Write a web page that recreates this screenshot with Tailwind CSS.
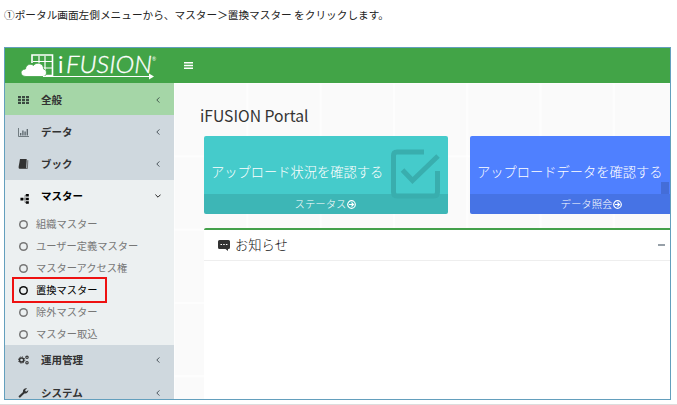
<!DOCTYPE html>
<html lang="ja">
<head>
<meta charset="utf-8">
<title>iFUSION Portal</title>
<script src="https://cdn.jsdelivr.net/npm/@tailwindcss/browser@4"></script>
</head>
<body class="relative h-[405px] w-[677px] overflow-hidden bg-white font-['Noto_Sans_CJK_JP',sans-serif] text-[#333]">
<p class="h-[47px] pt-[7px] pl-1 text-[10.67px] leading-4 whitespace-nowrap text-[#222]">①ポータル画面左側メニューから、マスター＞置換マスター をクリックします。</p>
<div class="relative ml-1 flex h-[353px] w-[667px] flex-col overflow-hidden border border-[#639fbd]">
  <header class="flex h-[35px] shrink-0 items-center bg-[#42a447]">
    <svg class="ml-3 h-[35px] w-[144px] shrink-0" viewBox="0 0 144 35" fill="none" stroke="#fff">
      <path d="M15 15V7H35.500V27.500H27" stroke-width="1.6"/>
      <path d="M22 8V17M28 8V27M16 13.500H35M22 20H35" stroke-width="1.200"/>
      <path d="M9 28.500C2.500 28.300 2.500 21.500 8.500 21C9 16.500 13.500 15 16.500 17.500C19.500 13 27 15.500 26.500 21C31 22 30 28.500 26 28.500Z" fill="#fff" stroke="#42a447" stroke-width=".8"/>
      <path d="M26 28.500H134" stroke-width="1.1"/>
      <path d="M132 25.500L137 28.500L132 31.500Z" fill="#fff" stroke="none"/>
      <text x="41" y="25" fill="#fff" stroke="none" font-family="Lato, sans-serif" font-size="22.5">i</text>
      <text x="49" y="25" fill="#fff" stroke="#fff" stroke-width=".3" font-family="Lato, sans-serif" font-weight="300" font-size="23.5" font-style="italic" textLength="86" lengthAdjust="spacingAndGlyphs">FUSION</text>
      <text x="135" y="13" fill="#fff" stroke="none" font-family="Lato, sans-serif" font-size="5">®</text>
    </svg>
    <svg class="ml-[23px] h-[7px] w-[9px]" viewBox="0 0 9 7" stroke="#fff" stroke-width="1.4"><path d="M0 .8H9M0 3.5H9M0 6.2H9"/></svg>
  </header>
  <div class="flex min-h-0 flex-1">
    <nav class="flex w-[169px] shrink-0 flex-col bg-[#cfd8de] text-[10.5px] font-bold">
      <div class="flex h-8 shrink-0 items-center bg-[#a5d6a7] pt-px pr-[14px] pl-[13px]">
        <svg class="h-2 w-[11px]" viewBox="0 0 11 8" fill="#3b4a41"><path d="M0 0h3v2.200H0zM4 0h3v2.200H4zM8 0h3v2.200H8zM0 2.900h3v2.200H0zM4 2.900h3v2.200H4zM8 2.900h3v2.200H8zM0 5.800h3v2.200H0zM4 5.800h3v2.200H4zM8 5.800h3v2.200H8z"/></svg>
        <span class="ml-3 flex-1">全般</span>
        <svg class="h-[6px] w-1" viewBox="0 0 4 6" fill="none" stroke="#455a50"><path d="M3.4.4L.8 3l2.6 2.6"/></svg>
      </div>
      <div class="flex h-[33px] shrink-0 items-center pt-px pr-[14px] pl-[13px]">
        <svg class="h-[9px] w-[11px]" viewBox="0 0 11 9" fill="none" stroke="#59646a"><path d="M.5 0V8.5H11" stroke-width=".8"/><path d="M2.7 7.5V5M4.9 7.5V2.5M7.1 7.5V3.5M9.3 7.5V1" stroke-width="1.3"/></svg>
        <span class="ml-3 flex-1">データ</span>
        <svg class="h-[6px] w-1" viewBox="0 0 4 6" fill="none" stroke="#4c565c"><path d="M3.4.4L.8 3l2.6 2.6"/></svg>
      </div>
      <div class="flex h-8 shrink-0 items-center pr-[14px] pl-[13px]">
        <svg class="h-[10px] w-[11px]" viewBox="0 0 11 10"><path d="M2 0H8.700L8.200 9.700H1.300Q.5 9.500.6 8Z" fill="#333"/><path d="M9.800 1.200L9.400 9.600H2" fill="none" stroke="#555" stroke-width=".8"/></svg>
        <span class="ml-3 flex-1">ブック</span>
        <svg class="h-[6px] w-1" viewBox="0 0 4 6" fill="none" stroke="#4c565c"><path d="M3.4.4L.8 3l2.6 2.6"/></svg>
      </div>
      <div class="flex h-[33px] shrink-0 items-center bg-[#ecf0f1] pr-[13px] pb-px pl-[15px] text-black">
        <svg class="mt-[5px] h-[10px] w-[10px]" viewBox="0 0 10 11"><path d="M0 4h3.200v3.200H0zM6 0H9.200v2.800H6zM6 4H9.200v2.800H6zM6 8H9.200v2.800H6z" fill="#000"/><path d="M3 5.5H7M7 1.4H5V9.4H7" fill="none" stroke="#333" stroke-width=".6"/></svg>
        <span class="ml-[11px] flex-1">マスター</span>
        <svg class="h-1 w-[6px]" viewBox="0 0 6 4" fill="none" stroke="#222"><path d="M.4.6L3 3.2 5.6.6"/></svg>
      </div>
      <ul class="h-[132px] shrink-0 bg-[#ecf0f1] text-[10.25px] font-normal text-[#777]">
        <li class="flex h-[22px] items-center pl-[14px]"><i class="mr-2 size-[9px] rounded-full shadow-[inset_0_0_0_1.5px_#777]"></i>組織マスター</li>
        <li class="flex h-[22px] items-center pl-[14px]"><i class="mr-2 size-[9px] rounded-full shadow-[inset_0_0_0_1.5px_#777]"></i>ユーザー定義マスター</li>
        <li class="flex h-[22px] items-center pl-[14px]"><i class="mr-2 size-[9px] rounded-full shadow-[inset_0_0_0_1.5px_#777]"></i>マスターアクセス権</li>
        <li class="flex h-[22px] items-center pl-[14px] text-black"><i class="mr-2 size-[9px] rounded-full shadow-[inset_0_0_0_1.5px_#111]"></i>置換マスター</li>
        <li class="flex h-[22px] items-center pl-[14px]"><i class="mr-2 size-[9px] rounded-full shadow-[inset_0_0_0_1.5px_#777]"></i>除外マスター</li>
        <li class="flex h-[22px] items-center pl-[14px]"><i class="mr-2 size-[9px] rounded-full shadow-[inset_0_0_0_1.5px_#777]"></i>マスター取込</li>
      </ul>
      <div class="flex h-8 shrink-0 items-center pr-[14px] pb-[2px] pl-[13px]">
        <svg class="h-[10px] w-[11px]" viewBox="0 0 11 10" fill="none" stroke="#333"><circle cx="3.6" cy="5" r="2.1" stroke-width="1.5"/><circle cx="3.6" cy="5" r="3.2" stroke-width=".9" stroke-dasharray="1.25 1.25"/><circle cx="9" cy="2.3" r="1.2" stroke-width="1.1"/><circle cx="9" cy="7.7" r="1.2" stroke-width="1.1"/></svg>
        <span class="ml-3 flex-1">運用管理</span>
        <svg class="h-[6px] w-1" viewBox="0 0 4 6" fill="none" stroke="#4c565c"><path d="M3.4.4L.8 3l2.6 2.6"/></svg>
      </div>
      <div class="flex h-8 shrink-0 items-center pr-[14px] pl-[13px]">
        <svg class="h-[10px] w-[11px]" viewBox="0 0 11 10"><path d="M.5 8.3L5 4C4.5 1.8 6.5-.2 9 .4L7.2 2 7.4 3.3 8.7 3.5 10.3 2C10.5 4.5 8.5 6 6.4 5.4L2 9.7Q.8 9.7.5 8.3Z" fill="#333"/></svg>
        <span class="ml-3 flex-1">システム</span>
        <svg class="h-[6px] w-1" viewBox="0 0 4 6" fill="none" stroke="#4c565c"><path d="M3.4.4L.8 3l2.6 2.6"/></svg>
      </div>
    </nav>
    <main class="min-w-0 flex-1 overflow-hidden bg-[#fafafa] bg-[linear-gradient(#ffffffaa_2px,transparent_2px),linear-gradient(90deg,#ffffffaa_2px,transparent_2px)] bg-[length:73.3px_73.3px] bg-[position:-1px_-1px] pt-[21px] pl-[30px]">
      <h1 class="-ml-[4px] h-8 text-[15.7px] leading-6 whitespace-nowrap">iFUSION Portal</h1>
      <div class="flex gap-[22px]">
        <section class="relative flex h-[78px] w-[244px] shrink-0 flex-col overflow-hidden rounded-[2px] bg-[#45cbcb] text-white">
          <svg class="absolute top-[13px] left-[187px] h-[50px] w-[50px]" viewBox="0 0 50 50" fill="none" stroke="#39aeae" stroke-width="5"><path d="M33 3H6Q2.5 3 2.5 6.5V43Q2.5 47 6 47H43Q46.500 47 46.500 43V22" /><path d="M11.500 21L21.500 31.500L47 7"/></svg>
          <div class="relative flex-1 pt-[25px] pl-[7px] text-[13.25px] leading-[22px] font-light whitespace-nowrap">アップロード状況を確認する</div>
          <div class="flex h-5 items-center justify-center gap-px bg-black/10 pr-px text-[10.4px] font-light">ステータス<svg class="size-[9px]" viewBox="0 0 9 9" fill="none" stroke="#fff"><circle cx="4.500" cy="4.500" r="3.800" stroke-width="1.200"/><path d="M2 4.500H6.500M4.500 2.500L6.500 4.500 4.500 6.500" stroke-width="1.100"/></svg></div>
        </section>
        <section class="relative flex h-[78px] w-[244px] shrink-0 flex-col overflow-hidden rounded-[2px] bg-[#4f80ff] text-white">
          <i class="absolute top-[46px] left-[191px] h-3 w-2 bg-[#446dd8]"></i>
          <div class="relative flex-1 pt-[25px] pl-[7px] text-[13.25px] leading-[22px] font-light whitespace-nowrap">アップロードデータを確認する</div>
          <div class="flex h-5 items-center justify-center gap-px bg-black/10 pr-px text-[10.4px] font-light">データ照会<svg class="size-[9px]" viewBox="0 0 9 9" fill="none" stroke="#fff"><circle cx="4.500" cy="4.500" r="3.800" stroke-width="1.200"/><path d="M2 4.500H6.500M4.500 2.500L6.500 4.500 4.500 6.500" stroke-width="1.100"/></svg></div>
        </section>
      </div>
      <section class="mt-[14px] h-[190px] rounded-tl-[2px] border-t-2 border-[#43a04a] bg-white">
        <div class="flex h-[31px] items-center border-b border-[#eee] pr-[5px] pl-[14px]">
          <svg class="h-[11px] w-3" viewBox="0 0 12 11"><path d="M1.500 0H10.500Q12 0 12 1.500V7.500Q12 9 10.500 9H10V11L7.500 9H1.500Q0 9 0 7.500V1.500Q0 0 1.500 0Z" fill="#333"/><path d="M2.500 4.500h1.500m1.200 0h1.500m1.200 0h1.500" stroke="#fff" stroke-width="1.200"/></svg>
          <h2 class="ml-[5px] flex-1 pb-px text-[13.300px] font-light text-[#111]">お知らせ</h2>
          <i class="h-[2px] w-[7px] bg-[#97a0a8]"></i>
        </div>
      </section>
    </main>
  </div>
</div>
<div class="absolute top-[277px] left-3 h-[26px] w-[95px] border-2 border-[#ee1111]"></div>
<div class="absolute top-[404px] left-0 h-px w-full bg-[#ddd]"></div>
</body>
</html>
